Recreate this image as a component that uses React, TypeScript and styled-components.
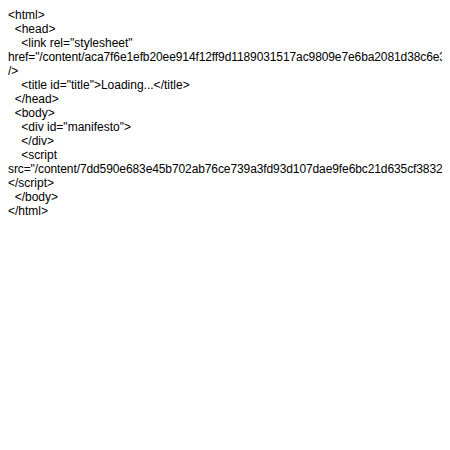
import React from "react";
import styled, { createGlobalStyle } from "styled-components";

const GlobalStyle = createGlobalStyle`
  html {
    background: #ffffff;
  }
  body {
    margin: 8px;
  }
`;

const SourceView = styled.div`
  font-family: "Liberation Sans", Arial, sans-serif;
  font-size: 12px;
  line-height: 14px;
  color: #000000;
  white-space: pre-wrap;
  word-break: normal;
  overflow-wrap: normal;
`;

const LongToken = styled.span`
  letter-spacing: -0.1px;
`;

export default function App() {
  return (
    <>
      <GlobalStyle />
      <SourceView>
        {"<html>\n  <head>\n    <link rel=\"stylesheet\" "}
        <LongToken>
          {'href="/content/aca7f6e1efb20ee914f12ff9d1189031517ac9809e7e6ba2081d38c6e3a4f1c2.css"'}
        </LongToken>
        {' />\n    <title id="title">Loading...</title>\n  </head>\n  <body>\n    <div id="manifesto">\n    </div>\n    <script '}
        <LongToken>
          {'src="/content/7dd590e683e45b702ab76ce739a3fd93d107dae9fe6bc21d635cf38329b1e4a0.js">'}
        </LongToken>
        {"\n</script>\n  </body>\n</html>"}
      </SourceView>
    </>
  );
}
